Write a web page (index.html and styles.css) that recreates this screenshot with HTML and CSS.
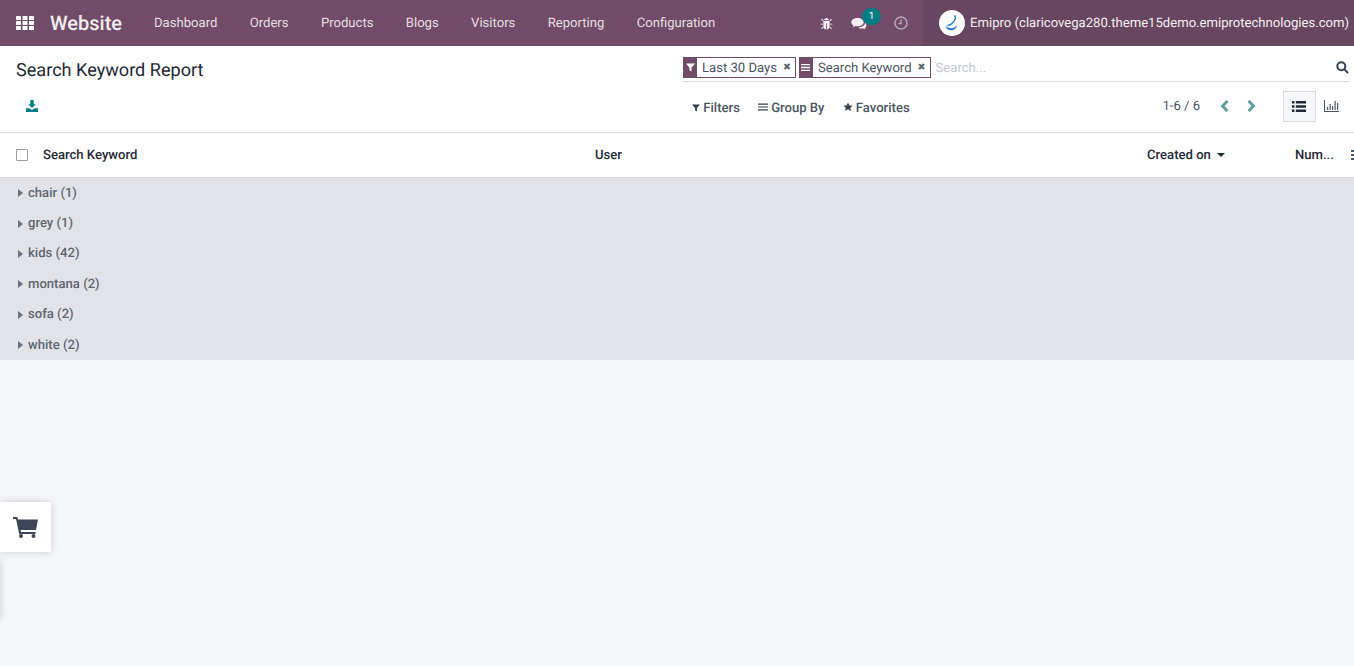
FILE: index.html
```html
<!DOCTYPE html>
<html lang="en-US">
  <head>
    <title>Search Keyword Report</title>
    <meta name="viewport" content="width=device-width, initial-scale=1" />
    <link rel="stylesheet" href="styles.css">
  </head>
  <body>
    <header class="navbar">
      <svg class="apps" viewBox="0 0 18 14" width="18" height="14" fill="#fff">
        <rect x="0" y="0" width="5" height="4" rx=".6"/><rect x="6.5" y="0" width="5" height="4" rx=".6"/><rect x="13" y="0" width="5" height="4" rx=".6"/>
        <rect x="0" y="5" width="5" height="4" rx=".6"/><rect x="6.5" y="5" width="5" height="4" rx=".6"/><rect x="13" y="5" width="5" height="4" rx=".6"/>
        <rect x="0" y="10" width="5" height="4" rx=".6"/><rect x="6.5" y="10" width="5" height="4" rx=".6"/><rect x="13" y="10" width="5" height="4" rx=".6"/>
      </svg>
      <span class="brand">Website</span>
      <nav class="menu">
        <a>Dashboard</a>
        <a>Orders</a>
        <a>Products</a>
        <a>Blogs</a>
        <a>Visitors</a>
        <a>Reporting</a>
        <a>Configuration</a>
      </nav>
      <div class="systray">
        <svg class="bug" viewBox="0 0 14 14" width="13" height="13" fill="#f4eff2">
          <path d="M4.4 3.6C4.6 2 5.6 1 7 1s2.4 1 2.6 2.6z"/>
          <path d="M3.6 4.4h6.8V10c0 1.9-1.3 3.3-3 3.5V6.6h-.8v6.9c-1.7-.2-3-1.6-3-3.5z"/>
          <path d="M1.2 2.6l.8-.8 2 2-.8.8zM12.8 2.6l-.8-.8-2 2 .8.8zM.6 7.2h2.6v1H.6zM10.8 7.2h2.6v1h-2.6zM1.2 12.4l2.2-2.2.7.7-2.2 2.2zM12.8 12.4l-2.2-2.2-.7.7 2.2 2.2z"/>
        </svg>
        <span class="chat">
          <svg viewBox="0 0 16 13" width="16" height="13" fill="#f4eff2">
            <path d="M6.5 1C3 1 .3 2.900.3 5.200c0 1.300.9 2.500 2.200 3.300-.2.700-.6 1.300-1.200 1.900 1.200-.1 2.300-.6 3.200-1.300.6.100 1.300.2 2 .2 3.500 0 6.200-1.900 6.200-4.100S10 1 6.500 1z"/>
            <path d="M14 5.400c.1 2.700-3 4.900-6.700 5 .9.800 2.100 1.200 3.500 1.200.5 0 1-.1 1.500-.2.700.5 1.500.8 2.400.9-.4-.4-.7-.9-.9-1.400 1-.6 1.600-1.500 1.600-2.500 0-1.200-.6-2.200-1.400-3z"/>
          </svg>
          <b class="badge">1</b>
        </span>
        <svg class="clock" viewBox="0 0 14 14" width="14" height="14" fill="none" stroke="#b9a5b1" stroke-width="1.500">
          <circle cx="7" cy="7" r="6"/><path d="M7 3.500V7.500H4.500"/>
        </svg>
      </div>
      <div class="usermenu">
        <svg class="avatar" viewBox="0 0 26 26" width="26" height="26">
          <circle cx="13" cy="13" r="13" fill="#fff"/>
          <path d="M15.500 5.500c2 1.500.5 5-2 7.500-2 2-3.500 2.500-5 2.200" fill="none" stroke="#2f7fd0" stroke-width="1.600"/>
          <path d="M6.500 15.500c.5 3.500 4 5.500 7.500 4.500 2.500-.7 4.300-3 4.500-6-1.200 2.500-3 4-5.500 4.200-2.500.2-4.700-.8-6.500-2.700z" fill="#1f78d1"/>
        </svg>
        <span class="username">Emipro (claricovega280.theme15demo.emiprotechnologies.com)</span>
      </div>
    </header>

    <section class="panel">
      <div class="panel-left">
        <h1>Search Keyword Report</h1>
        <svg class="download" viewBox="0 0 12 12" width="12" height="12" fill="#017e84">
          <path d="M4.300 0h3.400v4.200h2.100L6 8 2.200 4.200h2.100z"/>
          <path d="M0 8.200h3.600L6 10.200l2.400-2H12V12H0z"/>
        </svg>
      </div>
      <div class="panel-mid">
        <div class="searchbar">
          <span class="facet">
            <i class="facet-icon">
              <svg viewBox="0 0 10 10" width="9" height="9" fill="#fff"><path d="M0 .5h10L6.200 5v4.500L3.800 8V5z"/></svg>
            </i>
            <span class="facet-label">Last 30 Days</span>
            <span class="facet-x">&#10006;</span>
          </span>
          <span class="facet">
            <i class="facet-icon">
              <svg viewBox="0 0 10 10" width="9" height="9" fill="#fff"><path d="M0 1h10v1.500H0zM0 4.200h10v1.500H0zM0 7.500h10V9H0z"/></svg>
            </i>
            <span class="facet-label">Search Keyword</span>
            <span class="facet-x">&#10006;</span>
          </span>
          <span class="placeholder">Search...</span>
          <svg class="search-icon" viewBox="0 0 13 13" width="13" height="13" fill="none" stroke="#374151" stroke-width="2">
            <circle cx="5.300" cy="5.300" r="4"/><path d="M8.300 8.300l3.800 3.800"/>
          </svg>
        </div>
        <div class="panel-row">
          <div class="filters">
            <a>
              <svg viewBox="0 0 10 10" width="8" height="8" fill="#374151"><path d="M0 .5h10L6.200 5v4.500L3.800 8V5z"/></svg>
              Filters
            </a>
            <a>
              <svg viewBox="0 0 10 10" width="10" height="10" fill="#374151"><path d="M0 1.500h10v1.200H0zM0 4.400h10v1.200H0zM0 7.300h10v1.200H0z"/></svg>
              Group By
            </a>
            <a>
              <svg viewBox="0 0 12 12" width="10" height="10" fill="#374151"><path d="M6 .5l1.700 3.600 3.900.5-2.900 2.700.8 3.900L6 8.800l-3.500 1.900.8-3.900L.4 4.600l3.900-.5z"/></svg>
              Favorites
            </a>
          </div>
          <div class="pager">
            <span class="pager-count">1-6 / 6</span>
            <svg viewBox="0 0 9 12" width="9" height="12" fill="none" stroke="#5a9ea2" stroke-width="2.800"><path d="M7.500 1L2.500 6l5 5"/></svg>
            <svg viewBox="0 0 9 12" width="9" height="12" fill="none" stroke="#5a9ea2" stroke-width="2.800"><path d="M1.500 1l5 5-5 5"/></svg>
          </div>
          <div class="views">
            <span class="view active">
              <svg viewBox="0 0 14 11" width="14" height="11" fill="#1f2937"><path d="M0 0h2.400v2.400H0zM3.800 0H14v2.400H3.800zM0 4.300h2.400v2.400H0zM3.800 4.300H14v2.400H3.800zM0 8.600h2.400V11H0zM3.800 8.600H14V11H3.800z"/></svg>
            </span>
            <span class="view">
              <svg viewBox="0 0 15 12" width="15" height="12" fill="#4b5563"><path d="M0 0h1v11h14v1H0zM3 7h1.200v3H3zM5.500 4h1.200v6H5.500zM8 6h1.200v4H8zM10.500 1h1.200v9h-1.200zM13 3h1.200v7H13z"/></svg>
            </span>
          </div>
        </div>
      </div>
    </section>

    <main class="list">
      <div class="list-head">
        <span class="col-key"><i class="checkbox"></i>Search Keyword</span>
        <span class="col-user">User</span>
        <span class="col-date">Created on <i class="caret"></i></span>
        <span class="col-num">Num...</span>
        <span class="col-more"></span>
      </div>
      <div class="group"><i class="arrow"></i>chair (1)</div>
      <div class="group"><i class="arrow"></i>grey (1)</div>
      <div class="group"><i class="arrow"></i>kids (42)</div>
      <div class="group"><i class="arrow"></i>montana (2)</div>
      <div class="group"><i class="arrow"></i>sofa (2)</div>
      <div class="group"><i class="arrow"></i>white (2)</div>
    </main>

    <div class="cart-tab">
      <svg viewBox="0 0 25 21" width="25" height="21" fill="#3d4558">
        <path d="M0 0h4.300l.8 2.600H25l-2 10.400H7.600l.4 2h14.500v1.900H6.200L3 1.900H0z"/>
        <circle cx="8" cy="19" r="2"/><circle cx="20.500" cy="19" r="2"/>
      </svg>
    </div>
    <div class="side-shadow"></div>
  </body>
</html>
```

FILE: styles.css
```css
* {
  box-sizing: border-box;
}
html,
body {
  height: 100%;
}
body {
  margin: 0;
  overflow: hidden;
  background: #f6f7fb;
  color: #1f2937;
  font-family: Roboto, "Noto Sans", sans-serif;
  font-size: 13.100px;
  text-rendering: geometricPrecision;
}

/* top bar */
.navbar {
  display: flex;
  align-items: center;
  height: 46px;
  padding-left: 16px;
  background: #714b67;
  color: #fff;
}
.brand {
  margin-left: 16px;
  font-size: 20px;
  font-weight: 500;
  color: #f1edf0;
}
.menu {
  display: flex;
  gap: 32.350px;
  margin-left: 32px;
  padding-top: 1px;
  color: #e6dfe4;
}
.systray {
  display: flex;
  align-items: center;
  margin-left: auto;
  height: 100%;
}
.bug {
  margin-right: 18px;
}
.chat {
  position: relative;
  display: flex;
  margin-right: 27px;
}
.badge {
  position: absolute;
  top: -9px;
  right: -14px;
  width: 19px;
  height: 17px;
  border-radius: 9px;
  background: #017e84;
  font-size: 10px;
  font-weight: 400;
  line-height: 17px;
  text-align: center;
}
.usermenu {
  display: flex;
  align-items: center;
  gap: 5px;
  height: 100%;
  margin-left: 15px;
  padding: 0 5px 0 16px;
  background: #68465f;
  color: #f4eff2;
  white-space: nowrap;
}
.username {
  padding-top: 1px;
}

/* control panel */
.panel {
  display: flex;
  height: 87px;
  background: #fff;
  border-bottom: 1px solid #d8dadd;
}
.panel-left {
  width: 683px;
  padding: 14px 0 0 16px;
}
.panel-left h1 {
  margin: 0;
  font-size: 18.100px;
  font-weight: 400;
  line-height: 22px;
  color: #1f2937;
}
.download {
  display: block;
  margin: 18px 0 0 10px;
}
.panel-mid {
  flex: 1;
  padding: 11px 5px 0 0;
}
.searchbar {
  display: flex;
  align-items: center;
  gap: 3px;
  height: 25px;
  padding-bottom: 3px;
  border-bottom: 1px solid #d8dadd;
}
.facet {
  display: flex;
  align-items: center;
  height: 21px;
  border: 1px solid #714b67;
  background: #fff;
  color: #4b5563;
}
.facet-icon {
  display: flex;
  align-items: center;
  justify-content: center;
  width: 14px;
  height: 21px;
  margin-left: -1px;
  background: #714b67;
}
.facet-label {
  padding: 1px 6px 0 5px;
}
.facet-x {
  padding-right: 4px;
  font-size: 9.500px;
  color: #5f6670;
}
.placeholder {
  margin-left: 2px;
  padding-top: 1px;
  color: #c4c8ce;
}
.search-icon {
  margin-left: auto;
}
.panel-row {
  display: flex;
  align-items: center;
  margin-top: 7px;
  height: 34px;
}
.filters {
  display: flex;
  gap: 18px;
  margin: 4px 0 0 9px;
  font-weight: 500;
  color: #4b5563;
}
.pager {
  display: flex;
  align-items: center;
  gap: 19px;
  margin: 0 0 0 auto;
  color: #4b5563;
}
.pager svg + svg {
  margin-left: -1px;
}
.pager-count {
  margin: 1px 1px 0 0;
}
.views {
  display: flex;
  align-items: center;
  margin-left: 27px;
}
.view {
  display: flex;
  align-items: center;
  justify-content: center;
  width: 33px;
  height: 31px;
  padding-right: 2px;
}
.view.active {
  background: #f6f7fb;
  border: 1px solid #d8dadd;
}

/* list */
.list-head {
  position: relative;
  display: flex;
  align-items: center;
  height: 45px;
  padding-left: 16px;
  background: #fff;
  border-bottom: 1px solid #d8dadd;
  font-weight: 500;
  color: #1f2937;
}
.col-key {
  display: flex;
  align-items: center;
  width: 579px;
}
.checkbox {
  width: 12px;
  height: 12px;
  margin-right: 15px;
  border: 1px solid #9aa0a8;
  border-radius: 1px;
}
.col-user {
  width: 552px;
}
.col-date {
  display: flex;
  align-items: center;
  gap: 6px;
  width: 148px;
}
.caret {
  width: 0;
  height: 0;
  border-left: 4.500px solid transparent;
  border-right: 4.500px solid transparent;
  border-top: 4.500px solid #1f2937;
}
.col-more {
  position: absolute;
  top: 17px;
  right: 0;
  width: 3px;
  height: 12px;
  background: repeating-linear-gradient(#4b5563 0 2px, transparent 2px 4px);
}
.group {
  display: flex;
  align-items: center;
  height: 30.400px;
  padding-left: 18px;
  background: #e2e3e8;
  font-weight: 500;
  color: #5f6670;
}
.arrow {
  width: 0;
  height: 0;
  margin-right: 5px;
  border-top: 4.500px solid transparent;
  border-bottom: 4.500px solid transparent;
  border-left: 5px solid #6b7280;
}

/* floating cart tab */
.cart-tab {
  position: fixed;
  left: 0;
  top: 502px;
  display: flex;
  align-items: center;
  justify-content: flex-end;
  width: 51px;
  height: 50px;
  padding-right: 13px;
  background: #fff;
  box-shadow: 0 0 8px rgba(0, 0, 0, 0.18);
}
.side-shadow {
  position: fixed;
  left: -20px;
  top: 560px;
  width: 20px;
  height: 60px;
  box-shadow: 0 0 8px rgba(0, 0, 0, 0.18);
}
```
